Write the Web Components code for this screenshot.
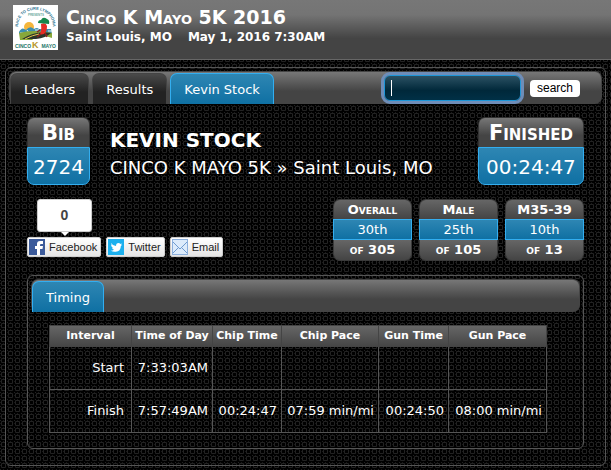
<!DOCTYPE html>
<html lang="en">
<head>
<meta charset="utf-8">
<title>Cinco K Mayo 5K 2016 - Kevin Stock</title>
<style>
:root{--grey:linear-gradient(#777,#444 60%,#444);--blue:linear-gradient(#2e86b3,#0f70a3);--line:#555;--edge:#33aef0}
*{box-sizing:border-box}
body{margin:0;color:#fff;font:13px/16px "DejaVu Sans",Verdana,sans-serif;background-color:#000;
background-image:url("data:image/svg+xml,%3Csvg xmlns='http://www.w3.org/2000/svg' width='7' height='7' shape-rendering='crispEdges'%3E%3Cpath fill='%23222' d='M2 1h3v1H2zM2 5h3v1H2zM1 2h1v3H1zM5 2h1v3H5zM0 0h1v1H0z'/%3E%3Cpath fill='%23181818' d='M1 1h1v1H1zM5 1h1v1H5zM1 5h1v1H1zM5 5h1v1H5zM0 3h1v1H0zM3 0h1v1H3z'/%3E%3C/svg%3E")}
</style>
</head>
<body>
<results-page></results-page>
<script>
function define(name, html) {
  const t = document.createElement('template');
  t.innerHTML = '<style>*{box-sizing:border-box}</style>' + html;
  customElements.define(name, class extends HTMLElement {
    constructor() {
      super();
      this.attachShadow({mode: 'open'}).append(t.content.cloneNode(true));
    }
  });
}

define('event-logo', `<style>:host{display:block;width:45px;height:45px;flex:none}svg{display:block}text{font-family:"Liberation Sans",sans-serif;font-weight:bold}</style>
<svg width="45" height="45" viewBox="0 0 45 45" role="img" aria-label="Event logo">
<rect width="45" height="45" fill="#fff"/>
<path id="arc" d="M5 22C5 -1 40 -1 40 22" fill="none"/>
<text font-size="4" fill="#2c7391" text-anchor="middle"><textPath href="#arc" startOffset="50%">RACE TO CURE LYMPHOMA</textPath></text>
<text x="23" y="11" font-size="3" fill="#6dada0" text-anchor="middle">PRESENTS</text>
<circle cx="16" cy="22" r="5" fill="#f4b63c"/>
<path d="M6 27q3-6 7-2 4-5 8-1 3-2 5 0h12l1 5H6z" fill="#3d8fb0"/>
<path d="M7 28h6M14 25l2 3M22 25h4M35 26h4" stroke="#e9f5f7"/>
<path d="M6 28q14-4 33 0v5q-12-5-20 2H7z" fill="#88a83a"/>
<path d="M9 34Q23 25 38 28q-5 5-15 6z" fill="#2b352c"/>
<path d="M12 34q8-4 14-5" fill="none" stroke="#e8c74c"/>
<path d="M28 19q5-2 6 2 0 6-3 8l-5 1q3-3 2-11z" fill="#e52c25"/>
<path d="M25 18q0-3 3-3 2-4 6-1 3 1 2 5z" fill="#16874b"/>
<path d="M27 25l-3 2M32 28l2 4M28 29l-4 3" stroke="#8c241e" stroke-width="1.5"/>
<g font-size="5" fill="#24766a"><text x="2" y="43">CINCO</text><text x="19" y="43" font-size="9" fill="#b8962a">K</text><text x="43" y="43" text-anchor="end">MAYO</text></g>
</svg>`);

define('event-header', `<style>:host{display:flex;height:60px;padding:5px 13px;gap:8px;background:linear-gradient(#777,#747474 25%,#444 65%);border-bottom:1px solid #666}
h1{margin:0;font-size:19px;line-height:24px;font-variant:small-caps}p{margin:0;display:flex;gap:16px;font-size:12px;line-height:16px;font-weight:bold}</style>
<event-logo></event-logo><div><h1><slot name="title"></slot></h1><p><slot></slot></p></div>`);

define('nav-tab', `<style>:host{display:block}a{display:block;height:31px;padding:0 13px;line-height:32px;color:#fff;text-decoration:none;border-radius:7px 7px 0 0;background:linear-gradient(#4a4a4a,#222 60%);border:1px solid #444;border-bottom:0}
:host([active]) a{background:var(--blue);border-color:var(--edge)}</style><a href="#"><slot></slot></a>`);

define('tab-bar', `<style>:host{display:flex;height:33px;padding:1px 0 0;gap:3px;border:1px solid #444;border-bottom:0;border-radius:7px;background:var(--grey)}</style><slot></slot>`);

define('search-box', `<style>:host{display:block;margin-left:auto}form{display:flex;align-items:center;margin:-1px 21px 0 0;gap:6px}
input{width:137px;height:26px;border:1px solid #1d96d8;border-radius:6px;outline:3px solid #6e8db8;outline-offset:0;background:linear-gradient(#fff,#fff) 6px 4px/1px 16px no-repeat,linear-gradient(#2b5163,#00283a 60%,#003046);color:#fff;caret-color:transparent;font:13px "DejaVu Sans",sans-serif;padding:0 6px;margin:3px}
button{height:17px;border:0;border-radius:4px;background:#fff;padding:0 7px;font:12px/15px "Liberation Sans",sans-serif;color:#000}</style>
<form><input type="text" aria-label="Search"><button type="button">search</button></form>`);

define('stat-box', `<style>:host{display:block;text-align:center}header{height:30px;padding:0 10px;font:bold 21px/31px "DejaVu Sans",sans-serif;font-variant:small-caps;background:var(--grey);border:1px solid #333;border-bottom:0;border-radius:7px 7px 0 0}
div{height:38px;padding:0 5px;font-size:20px;line-height:38px;background:var(--blue);border:1px solid var(--edge);border-radius:0 0 7px 7px}</style>
<header><slot name="label"></slot></header><div><slot></slot></div>`);

define('rank-box', `<style>:host{display:block;width:79px;text-align:center}header,footer{height:20px;font-weight:bold;font-variant:small-caps;line-height:19px;background:linear-gradient(#666,#444);border:1px solid #3a3a3a}
header{border-bottom:0;border-radius:7px 7px 0 0}footer{border-top:0;border-radius:0 0 7px 7px;height:21px}div{height:21px;line-height:20px;background:var(--blue);border:1px solid var(--edge)}</style>
<header><slot name="label"></slot></header><div><slot></slot></div><footer><slot name="total"></slot></footer>`);

define('share-button', `<style>:host{display:block}button{display:flex;align-items:center;gap:4px;height:20px;padding:0 3px 0 1px;border:1px solid #ccc;border-radius:2px;background:linear-gradient(#fff,#e4e4e4);font:11px/16px "Liberation Sans",Arial,sans-serif;color:#222;white-space:nowrap}::slotted(svg){display:block;flex:none}</style>
<button type="button"><slot name="icon"></slot><slot></slot></button>`);

define('share-bar', `<style>:host{display:block}.count{position:relative;width:55px;height:33px;margin:0 0 5px 10px;background:#fff;border:1px solid #ccc;border-radius:3px;color:#444;text-align:center;font:bold 14px/31px "Liberation Sans",Arial,sans-serif}
.count::after{content:"";position:absolute;left:23px;top:32px;border:4px solid transparent;border-top-color:#fff;border-bottom:0}.row{display:flex;gap:5px}</style>
<div class="count">0</div><div class="row">
<share-button><svg slot="icon" width="16" height="16"><rect width="16" height="16" fill="#3b5a9a"/><path d="M8 16v-6H6V7h2V5q0-3 3-3h3v3h-2q-1 0-1 1v1h3l-.5 3H11v6z" fill="#fff"/></svg>Facebook</share-button>
<share-button><svg slot="icon" width="16" height="16"><rect width="16" height="16" fill="#1cb0ee"/><path d="M3 4q2 3 5 3 0-3 2.500-3 1 0 2 1l1.500-.5-1 1.500 1-.2-1.200 1.400q0 5-5 5.500-2.800.3-5-1 2 0 3.200-1-1.700-.5-2-2h1Q3 7.500 3 6l1 .3Q3 5.200 3 4z" fill="#fff"/></svg>Twitter</share-button>
<share-button><svg slot="icon" width="16" height="16"><rect x=".5" y=".5" width="15" height="15" fill="#dcebfb" stroke="#8cb0dd"/><path d="M1 3l7 7 7-7M1 14l5-5M15 14l-5-5" fill="none" stroke="#6f9bd0"/></svg>Email</share-button></div>`);

define('timing-table', `<style>:host{display:block}table{border-collapse:collapse;width:498px;max-width:100%;table-layout:fixed;text-align:right;white-space:nowrap}
th,td{border:1px solid var(--line);padding:0}thead tr{background:linear-gradient(#666,#444)}thead th{height:21px;border-color:#444;font:bold 11px/20px "DejaVu Sans",sans-serif;text-align:center}
tbody th{font-weight:normal;padding-right:7px}tbody td{padding-right:4px}tbody tr{height:43px;font-size:13px}</style>
<table><colgroup><col style="width:82px"><col style="width:81px"><col style="width:69px"><col style="width:97px"><col style="width:70px"><col></colgroup>
<thead><tr><th>Interval</th><th>Time of Day</th><th>Chip Time</th><th>Chip Pace</th><th>Gun Time</th><th>Gun Pace</th></tr></thead>
<tbody><tr><th scope="row">Start</th><td>7:33:03AM</td><td></td><td></td><td></td><td></td></tr>
<tr><th scope="row">Finish</th><td>7:57:49AM</td><td>00:24:47</td><td>07:59 min/mi</td><td>00:24:50</td><td>08:00 min/mi</td></tr></tbody></table>`);

define('framed-panel', `<style>:host{display:block;border:1px solid var(--line);border-radius:6px;padding:3px}</style><slot></slot>`);

define('results-page', `<style>:host{display:block}
.main{margin:7px 5px 4px}.top{display:flex;align-items:flex-start;padding:13px 18px 0 18px}.who{flex:1;margin:10px 0 0 20px;white-space:nowrap}
h2{margin:0;font-size:20px;line-height:27px}.who p{margin:0;font-size:18px;line-height:27px}
.mid{display:flex;justify-content:space-between;padding:14px 18px 0 18px}.ranks{display:flex;gap:7px}
.timing{margin:14px 18px 13px 18px}timing-table{margin:13px 0 12px 18px}</style>
<event-header><span slot="title">Cinco K Mayo 5K 2016</span><span>Saint Louis, MO</span><span>May 1, 2016 7:30AM</span></event-header>
<framed-panel class="main">
<tab-bar><nav-tab>Leaders</nav-tab><nav-tab>Results</nav-tab><nav-tab active>Kevin Stock</nav-tab><search-box></search-box></tab-bar>
<div class="top"><stat-box><span slot="label">Bib</span>2724</stat-box>
<div class="who"><h2>KEVIN STOCK</h2><p>CINCO K MAYO 5K » Saint Louis, MO</p></div>
<stat-box><span slot="label">Finished</span>00:24:47</stat-box></div>
<div class="mid"><share-bar></share-bar><div class="ranks">
<rank-box><span slot="label">Overall</span>30th<span slot="total">of 305</span></rank-box>
<rank-box><span slot="label">Male</span>25th<span slot="total">of 105</span></rank-box>
<rank-box><span slot="label">M35-39</span>10th<span slot="total">of 13</span></rank-box></div></div>
<framed-panel class="timing"><tab-bar><nav-tab active>Timing</nav-tab></tab-bar><timing-table></timing-table></framed-panel>
</framed-panel>`);
</script>
</body>
</html>
